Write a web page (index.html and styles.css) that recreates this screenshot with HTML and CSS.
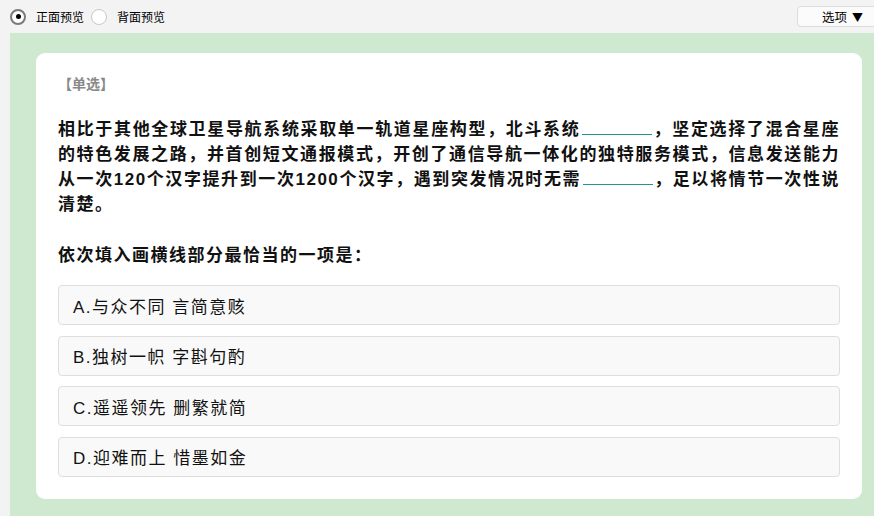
FILE: index.html
```html
<!DOCTYPE html>
<html lang="zh-CN">
<head>
<meta charset="utf-8">
<title>预览</title>
<link rel="stylesheet" href="styles.css">
</head>
<body>
<div class="topbar">
  <label class="radio"><span class="dot checked"></span><span class="radio-text">正面预览</span></label>
  <label class="radio"><span class="dot"></span><span class="radio-text">背面预览</span></label>
  <button class="options">选项<span class="caret">▼</span></button>
</div>
<div class="stage">
  <div class="card">
    <div class="tag">【单选】</div>
    <p class="question">相比于其他全球卫星导航系统采取单一轨道星座构型，北斗系统<span class="blank"></span>，坚定选择了混合星座的特色发展之路，并首创短文通报模式，开创了通信导航一体化的独特服务模式，信息发送能力从一次120个汉字提升到一次1200个汉字，遇到突发情况时无需<span class="blank"></span>，足以将情节一次性说清楚。</p>
    <p class="prompt">依次填入画横线部分最恰当的一项是：</p>
    <div class="choices">
      <div class="choice">A.与众不同 言简意赅</div>
      <div class="choice">B.独树一帜 字斟句酌</div>
      <div class="choice">C.遥遥领先 删繁就简</div>
      <div class="choice">D.迎难而上 惜墨如金</div>
    </div>
  </div>
</div>
</body>
</html>
```

FILE: styles.css
```css
html, body {
  margin: 0;
  padding: 0;
}
body {
  background: #f3f3f3;
  font-family: "Noto Sans CJK SC", "Noto Sans", sans-serif;
  color: #111;
  width: 874px;
  height: 516px;
  overflow: hidden;
}
.topbar {
  height: 33px;
  display: flex;
  align-items: center;
  padding-left: 10px;
  background: #f3f3f3;
}
.radio {
  display: flex;
  align-items: center;
  font-size: 12px;
  color: #000;
}
.dot {
  box-sizing: border-box;
  width: 16px;
  height: 16px;
  border-radius: 50%;
  background: #fff;
  border: 1px solid #c8c8c8;
  display: flex;
  align-items: center;
  justify-content: center;
}
.dot.checked {
  border: 2px solid #7a7a7a;
}
.dot.checked::after {
  content: "";
  width: 5px;
  height: 5px;
  border-radius: 50%;
  background: #000;
}
.radio-text {
  margin-left: 10px;
  margin-right: 7px;
}
.options {
  margin-left: auto;
  margin-right: -14px;
  width: 91px;
  height: 21px;
  box-sizing: border-box;
  border: 1px solid #dcdcdc;
  border-radius: 4px;
  background: #fbfbfb;
  font-family: "Noto Sans CJK SC", sans-serif;
  font-size: 12.5px;
  color: #000;
  text-align: left;
  padding: 0 0 0 24px;
  line-height: 19px;
}
.caret {
  margin-left: 5px;
  font-size: 11px;
}
.stage {
  margin-left: 10px;
  background: #cfe8d0;
  padding: 20px 12px 17px 26px;
  height: 446px;
}
.card {
  background: #fff;
  border-radius: 9px;
  padding: 20px 22px 21px 22px;
  height: 446px;
  box-sizing: border-box;
  font-family: "Liberation Sans", "Noto Sans CJK SC", sans-serif;
}
.tag {
  font-family: "Noto Sans CJK SC", sans-serif;
  font-size: 14px;
  line-height: 20px;
  font-weight: bold;
  color: #888;
}
.question {
  margin: 24px 0 0 0;
  font-size: 17px;
  line-height: 25px;
  font-weight: bold;
  letter-spacing: 1.5px;
  text-align: justify;
  color: #111;
}
.blank {
  display: inline-block;
  width: 70px;
  height: 16px;
  margin: 0 1px 0 2px;
  border-bottom: 1px solid #1f9494;
  vertical-align: baseline;
}
.prompt {
  margin: 26px 0 0 0;
  font-size: 17px;
  line-height: 25px;
  font-weight: bold;
  letter-spacing: 1.5px;
  color: #111;
}
.choices {
  margin-top: 17px;
  display: flex;
  flex-direction: column;
  gap: 10.5px;
}
.choice {
  box-sizing: border-box;
  height: 40px;
  border: 1px solid #dedede;
  border-radius: 4px;
  background: #f9f9f9;
  padding-left: 14px;
  display: flex;
  align-items: center;
  font-size: 17px;
  letter-spacing: 1.5px;
  color: #111;
}
```
